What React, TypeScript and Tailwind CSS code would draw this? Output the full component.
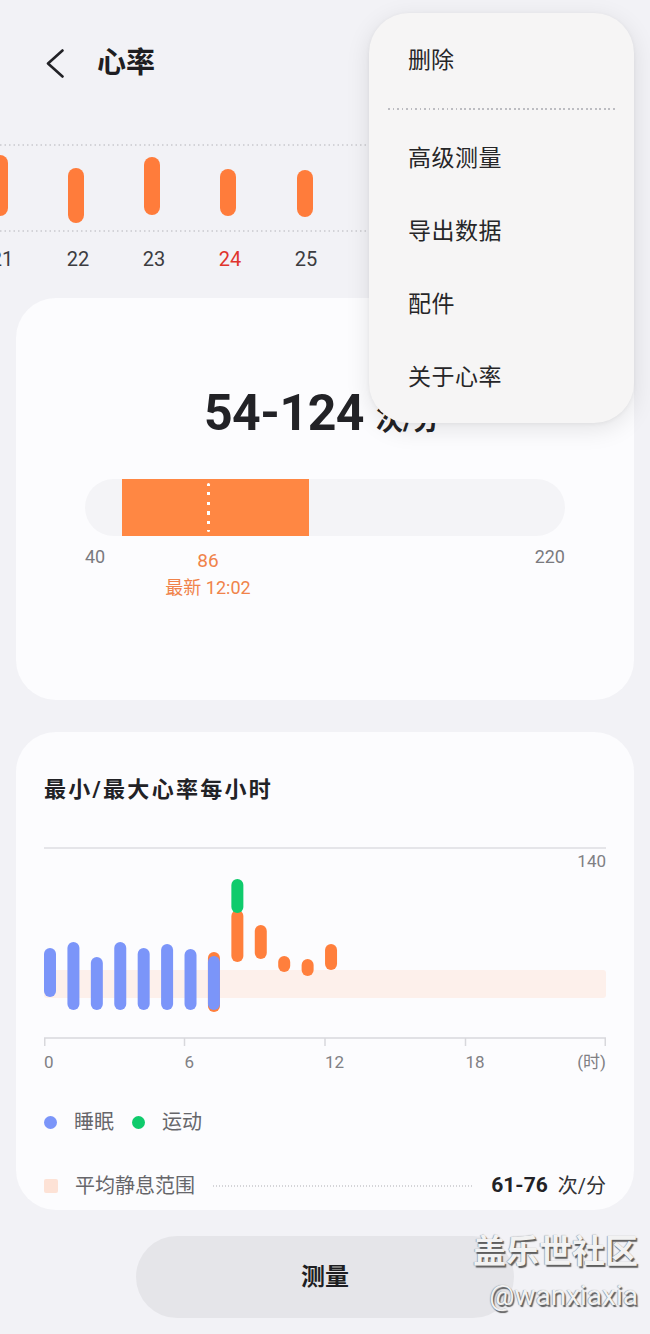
import React from 'react';

const STRIP_BARS = [
  { x: 0, y1: 15, y2: 76 },
  { x: 76, y1: 28, y2: 83 },
  { x: 152, y1: 17, y2: 75 },
  { x: 228, y1: 29, y2: 76 },
  { x: 305, y1: 30, y2: 77 },
  { x: 381, y1: 22, y2: 78 },
  { x: 457, y1: 26, y2: 80 },
];

const STRIP_LABELS = ['21', '22', '23', '24', '25', '26', '27'];

// hourly min/max, y in chart px (top line = 3, base line = 193)
type HourBar = { o?: [number, number]; b?: [number, number]; g?: [number, number] };
const HOURS: HourBar[] = [
  { b: [103, 152] },
  { b: [97, 165] },
  { b: [112, 165] },
  { b: [97, 165] },
  { b: [103, 165] },
  { b: [99, 165] },
  { b: [104, 165] },
  { o: [107, 167], b: [111, 165] },
  { o: [65, 117], g: [34, 68] },
  { o: [80, 114] },
  { o: [111, 127] },
  { o: [114, 131] },
  { o: [99, 125] },
];

const STEP = 23.42;
const BAR_W = 12;

function Bar({ x, y1, y2, fill, w }: { x: number; y1: number; y2: number; fill: string; w: number }) {
  return <rect x={x} y={y1} width={w} height={y2 - y1} rx={w / 2} fill={fill} />;
}

function DailyStrip() {
  return (
    <div className="mt-[44px]">
      <svg width="650" height="96" className="block">
        <line x1="0" y1="5" x2="634" y2="5" stroke="#c9c9ce" strokeWidth="1.5" strokeDasharray="1.5 3" />
        <line x1="0" y1="91" x2="634" y2="91" stroke="#c9c9ce" strokeWidth="1.5" strokeDasharray="1.5 3" />
        {STRIP_BARS.map((b, i) => (
          <Bar key={i} x={b.x - 8} y1={b.y1} y2={b.y2} w={16} fill="#ff7c3b" />
        ))}
      </svg>
      <div className="flex -ml-[36px] mt-[11px]">
        {STRIP_LABELS.map(l => (
          <span
            key={l}
            className={`w-[76px] shrink-0 text-center text-[20px] leading-[24px] ${l === '24' ? 'text-[#e0342d]' : 'text-[#3c3c40]'}`}
          >
            {l}
          </span>
        ))}
      </div>
    </div>
  );
}

function RangeCard() {
  return (
    <div className="mx-[16px] mt-[27px] h-[402px] rounded-[40px] bg-[#fcfcfe] flex flex-col items-center pt-[87px]">
      <div className="flex items-baseline h-[56px] -ml-[6px]">
        <span className="text-[50px] leading-[56px] font-bold text-[#222226] tracking-[-0.5px]">54-124</span>
        <span className="ml-[12px] text-[27px] font-bold text-[#222226]">次/分</span>
      </div>

      <div className="mt-[38px] w-[480px] h-[57px] rounded-full bg-[#f4f4f7] relative overflow-hidden">
        <div className="absolute top-0 bottom-0 left-[37px] w-[187px] bg-[#ff8743]" />
        <div className="absolute top-[4px] bottom-[4px] left-[122px] w-[3px] bg-[image:repeating-linear-gradient(180deg,#ffffff_0_3px,transparent_3px_9.5px)] rounded-full" />
      </div>

      <div className="relative w-[480px] h-[70px] mt-[10px]">
        <div className="flex justify-between text-[18px] leading-[22px] text-[#7a7a7e]">
          <span>40</span>
          <span>220</span>
        </div>
        <div className="absolute left-[123px] top-[4px] -translate-x-1/2 flex flex-col items-center text-[#f0834a] whitespace-nowrap">
          <span className="text-[19px] leading-[22px]">86</span>
          <span className="mt-[5px] text-[18px] leading-[22px]">最新 12:02</span>
        </div>
      </div>
    </div>
  );
}

function HourlyChart() {
  return (
    <div className="relative w-[562px] h-[205px] mt-[40px]">
      <svg width="562" height="205" className="block">
        <line x1="0" y1="3" x2="562" y2="3" stroke="#dedee2" strokeWidth="1.5" />
        <rect x="0" y="125" width="562" height="28" rx="3" fill="#fdf0eb" />
        {HOURS.map((h, i) => {
          const x = i * STEP;
          return (
            <g key={i}>
              {h.o && <Bar x={x} y1={h.o[0]} y2={h.o[1]} w={BAR_W} fill="#ff7f3c" />}
              {h.b && <Bar x={x} y1={h.b[0]} y2={h.b[1]} w={BAR_W} fill="#7b95f9" />}
              {h.g && <Bar x={x} y1={h.g[0]} y2={h.g[1]} w={BAR_W} fill="#0fcb6c" />}
            </g>
          );
        })}
        <line x1="0" y1="193" x2="562" y2="193" stroke="#d8d8dc" strokeWidth="1.5" />
        {[0.75, 140.5, 281, 421.5, 561.25].map(x => (
          <line key={x} x1={x} y1="193" x2={x} y2="201" stroke="#d8d8dc" strokeWidth="1.5" />
        ))}
      </svg>
      <span className="absolute right-0 top-[7px] text-[17px] leading-[18px] text-[#808084]">140</span>
    </div>
  );
}

function HourlyCard() {
  return (
    <div className="mx-[16px] mt-[32px] h-[478px] rounded-[40px] bg-[#fcfcfe] px-[28px] pt-[43px]">
      <h2 className="text-[22px] leading-[30px] font-bold text-[#222226] tracking-[2.3px]">最小/最大心率每小时</h2>

      <HourlyChart />

      <div className="grid grid-cols-4 mt-[2px] text-[17px] leading-[20px] text-[#808084]">
        <span>0</span>
        <span>6</span>
        <span>12</span>
        <span className="flex justify-between">
          <span>18</span>
          <span>(时)</span>
        </span>
      </div>

      <div className="flex items-center mt-[38px] h-[24px] text-[20px] text-[#66666a]">
        <span className="w-[13px] h-[13px] rounded-full bg-[#7b95f9]" />
        <span className="ml-[17px]">睡眠</span>
        <span className="ml-[18px] w-[13px] h-[13px] rounded-full bg-[#0fcb6c]" />
        <span className="ml-[17px]">运动</span>
      </div>

      <div className="flex items-center mt-[40px] h-[24px]">
        <span className="w-[14px] h-[14px] rounded-[2px] bg-[#fde2d6]" />
        <span className="ml-[17px] text-[20px] text-[#66666a]">平均静息范围</span>
        <span className="flex-1 ml-[18px] mr-[17px] h-[1.5px] bg-[image:repeating-linear-gradient(90deg,#d4d4d8_0_1px,transparent_1px_3px)]" />
        <span className="text-[21px] font-bold text-[#222226]">61-76</span>
        <span className="ml-[10px] text-[20px] text-[#333337]">次/分</span>
      </div>
    </div>
  );
}

function OverflowMenu() {
  const items = ['高级测量', '导出数据', '配件', '关于心率'];
  return (
    <div className="absolute left-[369px] top-[13px] w-[265px] rounded-[40px] bg-[#f6f5f5] pt-[12px] pb-[8px] shadow-[0_6px_24px_rgba(0,0,0,0.10),0_1px_4px_rgba(0,0,0,0.05)]">
      <div className="h-[73px] flex items-center pl-[39px] text-[23px] text-[#262628]">删除</div>
      <div className="h-[25px] pt-[10px] px-[19px]">
        <div className="h-[1.5px] bg-[image:repeating-linear-gradient(90deg,#bdbdc2_0_1.5px,transparent_1.5px_4.5px)]" />
      </div>
      {items.map(it => (
        <div key={it} className="h-[73px] flex items-center pl-[39px] text-[23px] tracking-[0.5px] text-[#262628]">
          {it}
        </div>
      ))}
    </div>
  );
}

export default function App() {
  return (
    <div className="relative w-[650px] h-[1334px] overflow-hidden bg-[#f2f2f6] font-['Roboto','Noto_Sans_CJK_SC',sans-serif]">
      {/* Header */}
      <div className="flex items-center h-[64px] mt-[32px] pl-[46px]">
        <svg width="18" height="30" viewBox="0 0 18 30" fill="none">
          <polyline points="16.5,1.5 2,14.5 16.5,27.5" stroke="#222226" strokeWidth="2.6" strokeLinecap="round" strokeLinejoin="round" />
        </svg>
        <h1 className="ml-[33px] text-[29px] font-bold text-[#1e1e22]">心率</h1>
      </div>

      <DailyStrip />
      <RangeCard />
      <HourlyCard />

      <div className="mt-[26px] mx-auto w-[378px] h-[82px] rounded-full bg-[#e5e5e9] flex items-center justify-center">
        <span className="text-[24px] font-bold text-[#1e1e22]">测量</span>
      </div>

      <OverflowMenu />

      {/* Watermark */}
      <div className="absolute right-[12px] top-[1232px] flex flex-col items-end text-[#f2f2f2] [text-shadow:1.5px_1.5px_1px_#5e5e5e,-0.5px_-0.5px_1px_#8a8a8a]">
        <span className="text-[33px] leading-[40px] font-bold">盖乐世社区</span>
        <span className="mt-[8px] text-[28px] leading-[32px]">@wanxiaxia</span>
      </div>
    </div>
  );
}
